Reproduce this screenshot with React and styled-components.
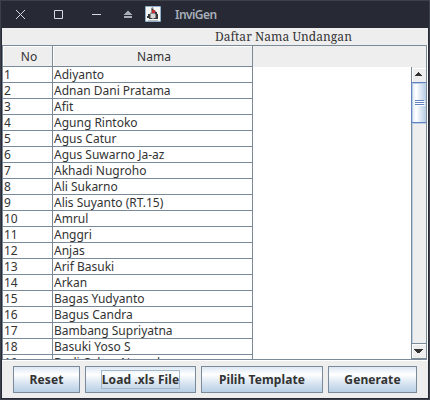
import React from "react";
import styled, { createGlobalStyle } from "styled-components";

const LINE = "#7a8a99";

const GlobalStyle = createGlobalStyle`
  * { box-sizing: border-box; }
  body { margin: 0; background: #272a34; overflow: hidden; }
`;

const Window = styled.div`
  width: 430px;
  height: 400px;
  display: flex;
  flex-direction: column;
  padding: 0 1px 1px;
  background: #272a34;
  border: 1px solid #3c404b;
  font-family: "Noto Sans", "Open Sans", sans-serif;
  font-size: 12px;
  color: #333;
`;

const TitleBar = styled.header`
  height: 27px;
  flex: none;
  display: flex;
  align-items: center;
`;

const TitleIcons = styled.svg`
  width: 160px;
  height: 27px;
  flex: none;
  display: block;
`;

const WindowTitle = styled.span`
  margin-left: 13px;
  font-size: 12px;
  line-height: 16px;
  font-weight: 600;
  letter-spacing: -0.55px;
  color: #a9afb9;
`;

const Content = styled.main`
  flex: 1;
  min-height: 0;
  display: flex;
  flex-direction: column;
  background: #eee;
`;

const Heading = styled.h1`
  height: 17px;
  flex: none;
  margin: 0;
  padding-left: 213px;
  font: 400 12px/17px "Noto Serif", "DejaVu Serif", serif;
  letter-spacing: 0.05px;
  white-space: nowrap;
`;

const ScrollPane = styled.section`
  height: 316px;
  flex: none;
  display: flex;
  flex-direction: column;
  border-bottom: 1px solid #fff;
  border-right: 1px solid #fff;
`;

const Frame = styled.div`
  height: 315px;
  display: flex;
  flex-direction: column;
  border: 1px solid ${LINE};
  overflow: hidden;
`;

const TableHeader = styled.div`
  height: 21px;
  flex: none;
  display: flex;
  background: #eee;
`;

const HeaderCell = styled.div`
  width: ${(p) => p.$width}px;
  padding-left: 3px;
  border-right: 1px solid ${LINE};
  border-bottom: 1px solid ${LINE};
  box-shadow: inset 1px 1px #fff;
  text-align: center;
  line-height: 21px;
`;

const Viewport = styled.div`
  flex: 1;
  min-height: 0;
  display: flex;
  background: #fff;
`;

const Rows = styled.div`
  flex: 1;
  overflow: hidden;
`;

const Row = styled.div`
  width: 250px;
  height: 16px;
  display: flex;
`;

const Cell = styled.div`
  width: ${(p) => p.$width}px;
  padding-left: 1px;
  border-right: 1px solid ${LINE};
  border-bottom: 1px solid ${LINE};
  line-height: 16px;
  white-space: nowrap;
`;

const ScrollBar = styled.div`
  width: 15px;
  flex: none;
  display: flex;
  flex-direction: column;
  border-left: 1px solid ${LINE};
  background: #eee;
`;

const ArrowButton = styled.div`
  height: ${(p) => p.$height}px;
  flex: none;
  border-top: 1px solid ${(p) => (p.$down ? LINE : "#eee")};
  box-shadow: inset 1px 1px #fff;
  svg { display: block; }
`;

const Thumb = styled.div`
  height: 41px;
  flex: none;
  margin-left: -1px;
  display: flex;
  align-items: center;
  justify-content: center;
  padding: 2px 0 0 2px;
  border: 1px solid #6382bf;
  border-right: 0;
  box-shadow: inset 1px 1px #b8cfe5;
  background: linear-gradient(90deg, #dde8f3 0, #fff 30%, #dde8f3 60%, #b8cfe5 100%);
  svg { flex: none; }
`;

const Track = styled.div`
  flex: 1;
  border-left: 1px solid #b8cfe5;
  border-top: 1px solid #b8cfe5;
`;

const Footer = styled.footer`
  display: flex;
  gap: 5px;
  padding: 5px 0 0 11px;
`;

const Button = styled.button`
  width: ${(p) => p.$width}px;
  height: 27px;
  padding: 0;
  display: flex;
  align-items: center;
  justify-content: center;
  border: 1px solid ${LINE};
  border-radius: 0;
  background: linear-gradient(#dde8f3 0, #fff 30%, #dde8f3 60%, #b8cfe5 100%);
  font: 700 12px/17px "Noto Sans", "Open Sans", sans-serif;
  letter-spacing: 0.1px;
  color: #333;
  white-space: nowrap;
`;

const Label = styled.span`
  height: 19px;
  line-height: 18px;
  border: 1px solid ${(p) => (p.$focused ? "#a3b8cc" : "transparent")};
`;

const names = [
  "Adiyanto", "Adnan Dani Pratama", "Afit", "Agung Rintoko", "Agus Catur",
  "Agus Suwarno Ja-az", "Akhadi Nugroho", "Ali Sukarno", "Alis Suyanto (RT.15)",
  "Amrul", "Anggri", "Anjas", "Arif Basuki", "Arkan", "Bagas Yudyanto",
  "Bagus Candra", "Bambang Supriyatna", "Basuki Yoso S", "Budi Cahyo Nugroho",
];

const buttons = [
  { text: "Reset", width: 67 },
  { text: "Load .xls File", width: 111, focused: true },
  { text: "Pilih Template", width: 122 },
  { text: "Generate", width: 89 },
];

function WindowControls() {
  return (
    <TitleIcons viewBox="2 1 160 27">
      <g fill="none" stroke="#d3dae3">
        <path d="M16 10l9 9M25 10l-9 9" />
        <path d="M54.5 10.5h8v8h-8z" />
        <path d="M92 14.5h9" />
      </g>
      <path d="M128 10.5l4.5 4.5h-9zM124 16h8v2h-8z" fill="#a9afb9" />
      <rect x="145" y="6" width="16" height="16" rx="1" fill="#8fb0c8" />
      <path d="M146 7h14v14h-14z" fill="#f7f7f6" />
      <path d="M151 8l2-1 1 3 2 1 1 4-1 4h-6l-1-4 2-3z" fill="#8a8a8a" />
      <path d="M152 9h1v2h-1zM148 14h2v2h-2zM147 16h3v2h-3zM149 18h3v1h-3zM155 12h2v2h-2zM156 14h2v4h-2zM154 18h4v1h-4z" fill="#34383c" />
      <path d="M151 14h4v4h-4z" fill="#d8d8d6" />
      <path d="M152 10h3v3h-3z" fill="#c62d35" />
      <path d="M148 20h10v1h-10z" fill="#b5babf" />
    </TitleIcons>
  );
}

export default function App() {
  return (
    <>
      <GlobalStyle />
      <Window>
        <TitleBar>
          <WindowControls />
          <WindowTitle>InviGen</WindowTitle>
        </TitleBar>
        <Content>
          <Heading>Daftar Nama Undangan</Heading>
          <ScrollPane>
            <Frame>
              <TableHeader>
                <HeaderCell $width={50}>No</HeaderCell>
                <HeaderCell $width={200}>Nama</HeaderCell>
              </TableHeader>
              <Viewport>
                <Rows>
                  {names.map((name, i) => (
                    <Row key={name}>
                      <Cell $width={50}>{i + 1}</Cell>
                      <Cell $width={200}>{name}</Cell>
                    </Row>
                  ))}
                </Rows>
                <ScrollBar>
                  <ArrowButton $height={15}>
                    <svg width="14" height="14"><path d="M6 4h1v1h1v1h1v1h1v1H3V7h1V6h1V5h1z" fill="#333" /></svg>
                  </ArrowButton>
                  <Thumb>
                    <svg width="10" height="7"><path d="M1 1.5h9M1 3.5h9M1 5.5h9" stroke="#fff" /><path d="M0 .5h9M0 2.5h9M0 4.5h9" stroke="#6382bf" /></svg>
                  </Thumb>
                  <Track />
                  <ArrowButton $height={16} $down>
                    <svg width="14" height="15"><path d="M2 5h9v1h-1v1H9v1H8v1H5V8H4V7H3V6H2z" fill="#333" /><path d="M0 14.5h14" stroke={LINE} /></svg>
                  </ArrowButton>
                </ScrollBar>
              </Viewport>
            </Frame>
          </ScrollPane>
          <Footer>
            {buttons.map((b) => (
              <Button key={b.text} $width={b.width}>
                <Label $focused={b.focused}>{b.text}</Label>
              </Button>
            ))}
          </Footer>
        </Content>
      </Window>
    </>
  );
}
